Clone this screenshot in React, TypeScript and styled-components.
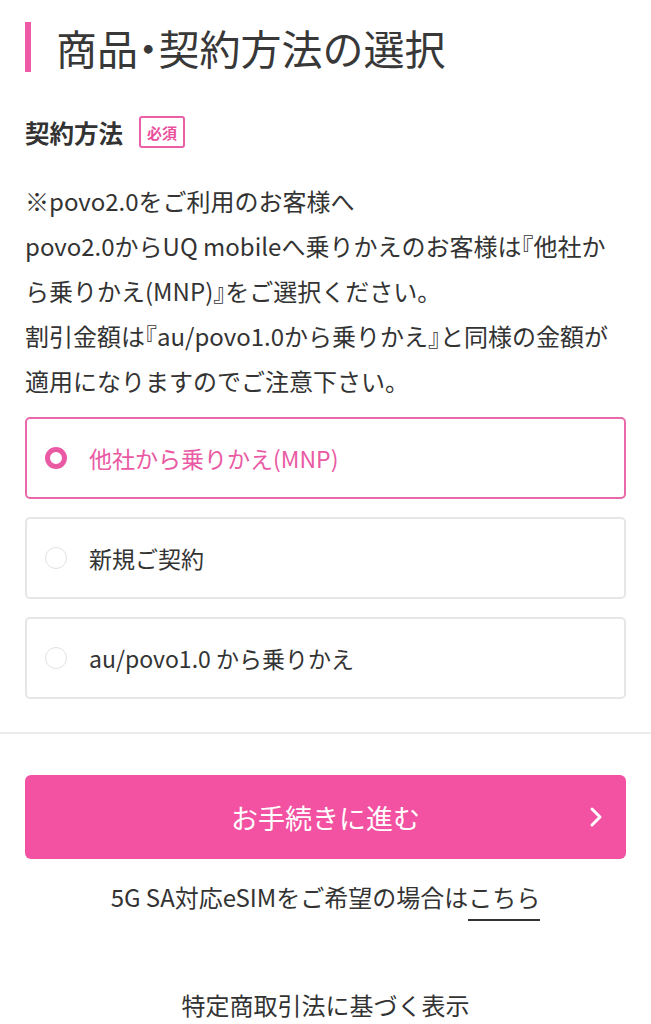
import React, { useState } from 'react';
import styled, { createGlobalStyle } from 'styled-components';

const GlobalStyle = createGlobalStyle`
  body {
    margin: 0;
    background: #fff;
    font-family: "Noto Sans CJK JP", "Noto Sans", sans-serif;
    color: #333;
  }
`;

const PINK = '#f352a2';

const Page = styled.div`
  width: 651px;
  padding-top: 22px;
  box-sizing: border-box;
`;

const Inner = styled.div`
  padding: 0 25px;
`;

const Heading = styled.h1`
  margin: 0;
  display: flex;
  align-items: center;
  gap: 25px;
  height: 50px;
  font-size: 41px;
  font-weight: 400;
  color: #383838;

  &::before {
    content: '';
    width: 6px;
    height: 50px;
    background: #ee5aa6;
    flex-shrink: 0;
  }
`;

// half-width middle dot
const Half = styled.span`
  font-feature-settings: "halt";
`;

const LabelRow = styled.div`
  margin-top: 44px;
  display: flex;
  align-items: center;
  gap: 16px;
  height: 32px;
`;

const Label = styled.span`
  font-size: 24.5px;
  font-weight: 700;
  color: #333;
`;

const Required = styled.span`
  display: inline-flex;
  align-items: center;
  justify-content: center;
  width: 46px;
  height: 32px;
  box-sizing: border-box;
  border: 2px solid #ea5fa6;
  border-radius: 3px;
  color: #ea4f9d;
  font-size: 15px;
  font-weight: 700;
`;

const Notice = styled.p`
  margin: 30px 0 0;
  font-size: 24px;
  line-height: 45px;
  color: #333;
  font-feature-settings: "halt";
`;

const Options = styled.div`
  margin-top: 14px;
  display: flex;
  flex-direction: column;
  gap: 18px;
`;

const Option = styled.label<{ $active: boolean }>`
  display: flex;
  align-items: center;
  gap: 22px;
  height: 82px;
  box-sizing: border-box;
  padding: 0 18px;
  border: 2px solid ${p => (p.$active ? '#e96aab' : '#e6e6e6')};
  border-radius: 5px;
  cursor: pointer;
  font-size: 23px;
  color: ${p => (p.$active ? '#ea5aa4' : '#333')};
`;

const Radio = styled.span<{ $active: boolean }>`
  width: 22px;
  height: 22px;
  box-sizing: border-box;
  border-radius: 50%;
  flex-shrink: 0;
  border: ${p => (p.$active ? `5.5px solid #ea5aa4` : '1.5px solid #e2e2e2')};
  background: #fff;
`;

const Divider = styled.hr`
  margin: 33px 0 0;
  border: none;
  border-top: 2px solid #ececec;
`;

const Proceed = styled.button`
  position: relative;
  margin-top: 41px;
  width: 100%;
  height: 84px;
  border: none;
  border-radius: 6px;
  background: ${PINK};
  color: #fff;
  font-family: inherit;
  font-size: 27px;
  font-weight: 400;
  cursor: pointer;
`;

const Chevron = styled.svg`
  position: absolute;
  right: 22px;
  top: 50%;
  transform: translateY(-50%);
`;

const LinkLine = styled.p`
  margin: 20px 0 0;
  text-align: center;
  font-size: 24px;
  line-height: 36px;
  color: #333;
`;

const Here = styled.a`
  color: #333;
  text-decoration: none;
  border-bottom: 2px solid #333;
  padding-bottom: 5px;
`;

const Footer = styled.p`
  margin: 72px 0 0;
  text-align: center;
  font-size: 24px;
  line-height: 36px;
  color: #333;
`;

const options = ['他社から乗りかえ(MNP)', '新規ご契約', 'au/povo1.0 から乗りかえ'];

export default function App() {
  const [selected, setSelected] = useState(0);

  return (
    <Page>
      <GlobalStyle />
      <Inner>
        <Heading>
          <span>商品<Half>・</Half>契約方法の選択</span>
        </Heading>
        <LabelRow>
          <Label>契約方法</Label>
          <Required>必須</Required>
        </LabelRow>
        <Notice>
          ※povo2.0をご利用のお客様へ
          <br />
          povo2.0からUQ mobileへ乗りかえのお客様は『他社から乗りかえ(MNP)』をご選択ください。
          <br />
          割引金額は『au/povo1.0から乗りかえ』と同様の金額が適用になりますのでご注意下さい。
        </Notice>
        <Options>
          {options.map((text, i) => (
            <Option key={text} $active={selected === i} onClick={() => setSelected(i)}>
              <Radio $active={selected === i} />
              <span>{text}</span>
            </Option>
          ))}
        </Options>
      </Inner>
      <Divider />
      <Inner>
        <Proceed>
          お手続きに進む
          <Chevron width="16" height="22" viewBox="0 0 16 22">
            <polyline points="4,3 12,11 4,19" fill="none" stroke="#fff" strokeWidth="3" strokeLinecap="round" strokeLinejoin="round" />
          </Chevron>
        </Proceed>
        <LinkLine>
          5G SA対応eSIMをご希望の場合は<Here href="#">こちら</Here>
        </LinkLine>
        <Footer>特定商取引法に基づく表示</Footer>
      </Inner>
    </Page>
  );
}
